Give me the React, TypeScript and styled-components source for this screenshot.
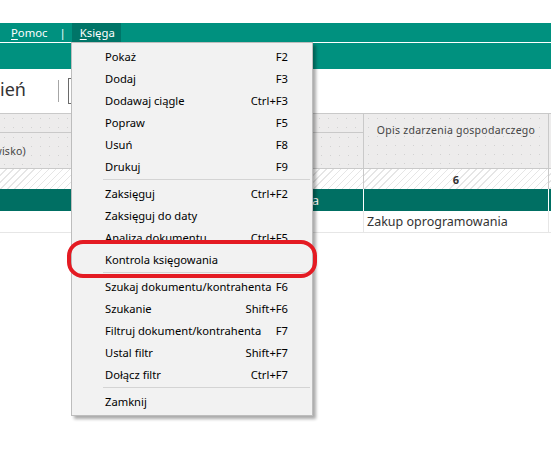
import styled, { createGlobalStyle } from 'styled-components';

const GlobalStyle = createGlobalStyle`
  html, body {
    margin: 0;
    padding: 0;
    background: #ffffff;
  }
  body {
    font-family: 'Noto Sans', 'DejaVu Sans', sans-serif;
    overflow: hidden;
  }
`;

type MenuEntry = { label: string; key?: string } | 'sep';

const menuEntries: MenuEntry[] = [
  { label: 'Pokaż', key: 'F2' },
  { label: 'Dodaj', key: 'F3' },
  { label: 'Dodawaj ciągle', key: 'Ctrl+F3' },
  { label: 'Popraw', key: 'F5' },
  { label: 'Usuń', key: 'F8' },
  { label: 'Drukuj', key: 'F9' },
  'sep',
  { label: 'Zaksięguj', key: 'Ctrl+F2' },
  { label: 'Zaksięguj do daty' },
  { label: 'Analiza dokumentu', key: 'Ctrl+F5' },
  { label: 'Kontrola księgowania' },
  'sep',
  { label: 'Szukaj dokumentu/kontrahenta', key: 'F6' },
  { label: 'Szukanie', key: 'Shift+F6' },
  { label: 'Filtruj dokument/kontrahenta', key: 'F7' },
  { label: 'Ustal filtr', key: 'Shift+F7' },
  { label: 'Dołącz filtr', key: 'Ctrl+F7' },
  'sep',
  { label: 'Zamknij' },
];

export default function App() {
  return (
    <Page>
      <GlobalStyle />
      <TopGap />
      <MenuBar>
        <BarItem><u>P</u>omoc</BarItem>
        <BarPipe>|</BarPipe>
        <BarItem $active><u>K</u>sięga</BarItem>
      </MenuBar>
      <TitleBar />
      <Toolbar>
        <ClippedLabel><span>Zmień</span></ClippedLabel>
        <ToolDivider />
        <FieldBox />
      </Toolbar>

      <Grid>
        <HeadCell $col="1 / 3" $row="1">&nbsp;</HeadCell>
        <HeadCell $col="1" $row="2" $right>Kontrahent (nazwa lub nazwisko)</HeadCell>
        <HeadCell $col="2" $row="2" />
        <HeadCell $col="3" $row="1 / 3" $top>Opis zdarzenia gospodarczego</HeadCell>
        <HeadCell $col="4" $row="1 / 3" />

        <NumCell />
        <NumCell />
        <NumCell>6</NumCell>
        <NumCell />

        <SelCell />
        <SelCell $right>Firma</SelCell>
        <SelCell />
        <SelCell />

        <DataCell />
        <DataCell />
        <DataCell>Zakup oprogramowania</DataCell>
        <DataCell />
      </Grid>

      <DropMenu>
        {menuEntries.map((e, i) =>
          e === 'sep' ? (
            <MenuSep key={i} />
          ) : (
            <MenuItem key={i}>
              <span>{e.label}</span>
              <span>{e.key}</span>
            </MenuItem>
          )
        )}
      </DropMenu>

      <Highlight />
    </Page>
  );
}

const Page = styled.div`
  position: relative;
  width: 551px;
  height: 468px;
  overflow: hidden;
  background: #ffffff;
`;

const TopGap = styled.div`
  height: 23px;
`;

const MenuBar = styled.div`
  display: flex;
  align-items: stretch;
  height: 19px;
  background: #00917f;
  padding-left: 3px;
  font-size: 11.3px;
  color: #ffffff;
`;

const BarItem = styled.div<{ $active?: boolean }>`
  display: flex;
  align-items: center;
  padding: 0 6px 0 8px;
  background: ${p => (p.$active ? '#007568' : 'transparent')};
  u {
    text-decoration: underline;
    text-underline-offset: 2px;
  }
`;

const BarPipe = styled.div`
  display: flex;
  align-items: center;
  padding: 0 6px 0 6px;
`;

const TitleBar = styled.div`
  height: 26px;
  border-top: 1px solid #ffffff;
  background: #00917f;
`;

const Toolbar = styled.div`
  display: flex;
  align-items: center;
  height: 44px;
`;

const ClippedLabel = styled.div`
  display: flex;
  justify-content: flex-end;
  width: 26px;
  overflow: hidden;
  white-space: nowrap;
  font-size: 18px;
  color: #333333;
  margin-top: -4px;
`;

const ToolDivider = styled.div`
  width: 1px;
  height: 22px;
  margin-left: 32px;
  background: #a6a6a6;
`;

const FieldBox = styled.div`
  width: 80px;
  height: 24px;
  margin-left: 9px;
  border: 1px solid #6a6a6a;
`;

const Grid = styled.div`
  display: grid;
  grid-template-columns: 200px 164px 185px 1fr;
  grid-template-rows: 19px 36px 20px 22px 22px;
  border-top: 1px solid #c9c9c9;
  font-size: 10.5px;
  color: #444444;
`;

const HeadCell = styled.div<{ $col: string; $row: string; $right?: boolean; $top?: boolean }>`
  grid-column: ${p => p.$col};
  grid-row: ${p => p.$row};
  display: flex;
  align-items: ${p => (p.$top ? 'flex-start' : 'center')};
  justify-content: ${p => (p.$right ? 'flex-end' : 'center')};
  padding: ${p => (p.$right ? '0 173px 0 0' : p.$top ? '9px 0 0 0' : '0')};
  overflow: hidden;
  white-space: nowrap;
  letter-spacing: 0.25px;
  background-color: #edecec;
  background-image: radial-gradient(circle, #d2d2d2 0.6px, transparent 0.9px);
  background-size: 9px 9px;
  border-right: 1px solid #c9c9c9;
  border-bottom: 1px solid #c9c9c9;
`;

const NumCell = styled.div`
  display: flex;
  align-items: center;
  justify-content: center;
  overflow: hidden;
  font-weight: bold;
  font-size: 11px;
  color: #333333;
  background: repeating-linear-gradient(135deg, #ffffff 0 4px, #e6e6e6 4px 5px);
  border-right: 1px solid #c9c9c9;
`;

const SelCell = styled.div<{ $right?: boolean }>`
  display: flex;
  align-items: center;
  justify-content: ${p => (p.$right ? 'flex-end' : 'flex-start')};
  padding-right: ${p => (p.$right ? '44px' : '0')};
  overflow: hidden;
  white-space: nowrap;
  background: #006f63;
  border-right: 1px solid #ffffff;
  color: #ffffff;
  font-size: 12.5px;
`;

const DataCell = styled.div`
  display: flex;
  align-items: center;
  padding-left: 3px;
  overflow: hidden;
  white-space: nowrap;
  font-size: 12.5px;
  color: #333333;
  border-right: 1px solid #e6e6e6;
  border-bottom: 1px solid #e6e6e6;
`;

const DropMenu = styled.div`
  position: absolute;
  left: 71px;
  top: 42px;
  width: 240px;
  padding: 2px 0 3px;
  background: #f2f2f2;
  border: 1px solid #bdbdbd;
  box-shadow: 3px 3px 3px rgba(0, 0, 0, 0.33);
  font-size: 11.2px;
  color: #000000;
`;

const MenuItem = styled.div`
  display: flex;
  align-items: center;
  justify-content: space-between;
  height: 22px;
  padding: 0 24px 0 33px;
  white-space: nowrap;
`;

const MenuSep = styled.div`
  height: 1px;
  margin: 2px 2px 2px 31px;
  background: #d4d4d4;
`;

const Highlight = styled.div`
  position: absolute;
  left: 67px;
  top: 240px;
  width: 242px;
  height: 30px;
  border: 4px solid #e41b23;
  border-radius: 16px;
`;
